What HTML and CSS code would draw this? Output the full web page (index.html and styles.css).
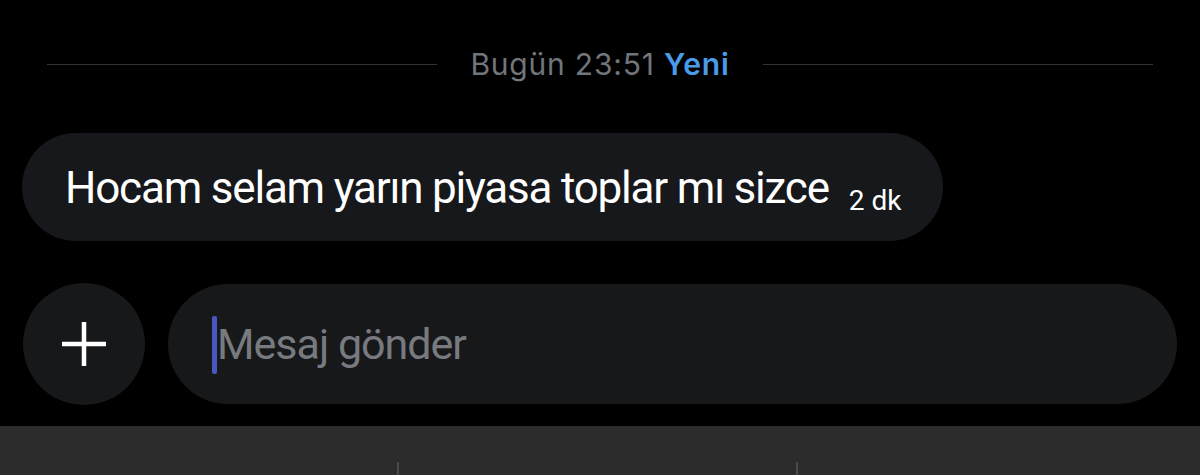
FILE: index.html
```html
<!DOCTYPE html>
<html lang="tr">
<head>
<meta charset="utf-8">
<link rel="stylesheet" href="styles.css">
</head>
<body>
<div class="screen">
  <div class="divider-row">
    <div class="rule"></div>
    <div class="stamp">Bugün 23:51 <span class="new">Yeni</span></div>
    <div class="rule"></div>
  </div>
  <div class="msg-row">
    <div class="bubble">
      <span class="msg-text">Hocam selam yarın piyasa toplar mı sizce</span>
      <span class="msg-time">2 dk</span>
    </div>
  </div>
  <div class="composer">
    <div class="plus-btn">
      <svg width="46" height="46" viewBox="0 0 46 46"><path d="M23 1v44M1 23h44" stroke="#fff" stroke-width="4.5" stroke-linecap="butt"/></svg>
    </div>
    <div class="input">
      <span class="caret"></span>
      <span class="placeholder">Mesaj gönder</span>
    </div>
  </div>
  <div class="keyboard">
    <div class="key"></div>
    <div class="key"></div>
    <div class="key"></div>
  </div>
</div>
</body>
</html>
```

FILE: styles.css
```css
* { box-sizing: border-box; }
html, body { margin: 0; padding: 0; background: #000; }
body { width: 1200px; height: 475px; overflow: hidden; font-family: "Inter", "Liberation Sans", sans-serif; }
.screen { display: flex; flex-direction: column; height: 475px; }
.divider-row {
  display: flex; align-items: center; gap: 33px;
  padding: 0 47px; margin-top: 44px; height: 40px;
}
.rule { flex: 1; height: 1px; background: #2f3336; }
.stamp { color: #71767b; font-size: 30px; letter-spacing: 0.8px; white-space: nowrap; }
.new { color: #4a9be8; font-weight: 600; }
.msg-row { display: flex; padding-left: 22px; margin-top: 49px; }
.bubble {
  width: 921px; height: 108px; border-radius: 54px; background: #16181b;
  display: flex; align-items: center; padding-left: 43px; padding-top: 2px;
}
.msg-text { color: #fff; font-family: "Roboto", "Liberation Sans", sans-serif; font-size: 44px; letter-spacing: -1.2px; }
.msg-time { color: #fff; font-family: "Roboto", "Liberation Sans", sans-serif; font-size: 28px; margin-left: 20px; margin-top: 24px; }
.composer { display: flex; align-items: center; gap: 23px; padding-left: 23px; padding-right: 23px; margin-top: 42px; }
.plus-btn {
  width: 122px; height: 122px; border-radius: 50%; background: #17181a;
  display: flex; align-items: center; justify-content: center; flex: none;
}
.input {
  flex: 1; height: 120px; border-radius: 60px; background: #17181a;
  display: flex; align-items: center; padding-left: 44px;
}
.caret { width: 5px; height: 58px; background: #4a57c2; border-radius: 2px; margin-top: 2px; }
.placeholder { color: #777a7f; font-family: "Roboto", "Liberation Sans", sans-serif; font-size: 43px; letter-spacing: -1px; }
.keyboard {
  margin-top: 21px; flex: 1; background: #2c2c2c;
  display: grid; grid-template-columns: 399px 399px 1fr; align-items: end;
}
.key { height: 13px; border-right: 2px solid #4a4a4a; }
.key:last-child { border-right: none; }
```
